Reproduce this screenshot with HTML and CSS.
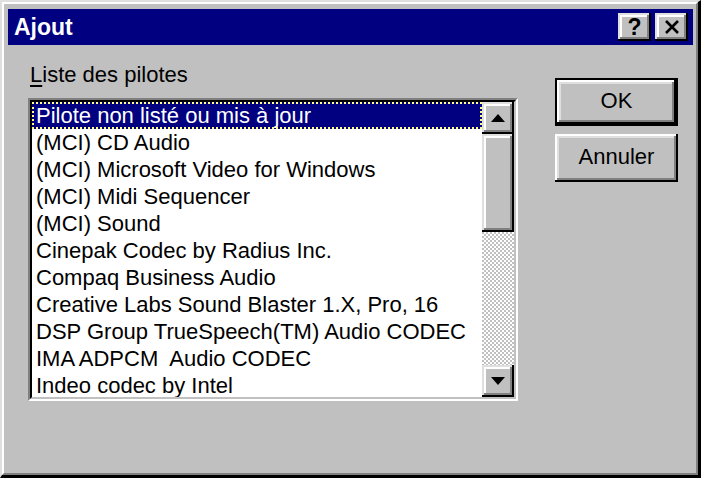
FILE: index.html
```html
<!DOCTYPE html>
<html lang="fr">
<head>
<meta charset="utf-8">
<title>Ajout</title>
<link rel="stylesheet" href="styles.css">
</head>
<body>
<div class="win">
  <div class="win-in">
    <div class="titlebar">
      <span class="title">Ajout</span>
      <div class="capbtns">
        <div class="capbtn help">?</div>
        <div class="capbtn close">
          <svg width="16" height="14" viewBox="0 0 16 14"><path d="M2 1 L14 13 M14 1 L2 13" stroke="#000" stroke-width="2.6" fill="none"/></svg>
        </div>
      </div>
    </div>
    <div class="client">
      <div class="left">
        <div class="label"><u>L</u>iste des pilotes</div>
        <div class="listbox">
          <div class="listbox-in">
            <div class="items">
              <div class="item selected">Pilote non listé ou mis à jour</div>
              <div class="item">(MCI) CD Audio</div>
              <div class="item">(MCI) Microsoft Video for Windows</div>
              <div class="item">(MCI) Midi Sequencer</div>
              <div class="item">(MCI) Sound</div>
              <div class="item">Cinepak Codec by Radius Inc.</div>
              <div class="item">Compaq Business Audio</div>
              <div class="item">Creative Labs Sound Blaster 1.X, Pro, 16</div>
              <div class="item">DSP Group TrueSpeech(TM) Audio CODEC</div>
              <div class="item">IMA ADPCM&nbsp; Audio CODEC</div>
              <div class="item">Indeo codec by Intel</div>
            </div>
            <div class="vscroll">
              <div class="sbtn">
                <svg width="14" height="8" viewBox="0 0 14 8"><polygon points="7,0 14,8 0,8" fill="#000"/></svg>
              </div>
              <div class="thumb"></div>
              <div class="track"></div>
              <div class="sbtn">
                <svg width="14" height="8" viewBox="0 0 14 8"><polygon points="0,0 14,0 7,8" fill="#000"/></svg>
              </div>
            </div>
          </div>
        </div>
      </div>
      <div class="right">
        <div class="btn-default"><div class="btn">OK</div></div>
        <div class="btn">Annuler</div>
      </div>
    </div>
  </div>
</div>
</body>
</html>
```
FILE: styles.css
```css
html, body {
  margin: 0;
  padding: 0;
}
body {
  width: 701px;
  height: 478px;
  overflow: hidden;
  background: #c0c0c0;
  font-family: "Liberation Sans", Arial, sans-serif;
  font-size: 22px;
  color: #000;
}
.win {
  box-sizing: border-box;
  width: 701px;
  height: 478px;
  border-style: solid;
  border-width: 2px 3px 3px 2px;
  border-color: #dfdfdf #000 #000 #dfdfdf;
  background: #c0c0c0;
}
.win-in {
  box-sizing: border-box;
  height: 100%;
  border-style: solid;
  border-width: 2px;
  border-color: #fff #808080 #808080 #fff;
  padding: 5px 3px 0 4px;
  display: flex;
  flex-direction: column;
}
.titlebar {
  height: 36px;
  flex: none;
  background: #000080;
  display: flex;
  align-items: center;
  justify-content: space-between;
  padding: 0 5px 0 6px;
}
.title {
  color: #fff;
  font-weight: bold;
  font-size: 23px;
  line-height: 36px;
}
.capbtns {
  display: flex;
  gap: 4px;
}
.capbtn {
  box-sizing: border-box;
  width: 33px;
  height: 28px;
  background: #c0c0c0;
  box-shadow: inset -2px -2px #000, inset 2px 2px #dfdfdf, inset -4px -4px #808080, inset 4px 4px #fff;
  display: flex;
  align-items: center;
  justify-content: center;
}
.help {
  font-weight: bold;
  font-size: 23px;
  line-height: 28px;
  padding-bottom: 1px;
}
.client {
  flex: 1;
  display: flex;
  padding-left: 20px;
}
.left {
  display: flex;
  flex-direction: column;
  padding-top: 17px;
}
.label {
  line-height: 26px;
  padding-left: 2px;
  margin-bottom: 10px;
}
.label u {
  text-decoration-thickness: 2px;
  text-underline-offset: 3px;
}
.listbox {
  box-sizing: border-box;
  width: 490px;
  height: 303px;
  border-style: solid;
  border-width: 2px;
  border-color: #808080 #fff #fff #808080;
}
.listbox-in {
  box-sizing: border-box;
  height: 100%;
  border-style: solid;
  border-width: 2px;
  border-color: #000 #c0c0c0 #c0c0c0 #000;
  background: #fff;
  display: flex;
}
.items {
  flex: 1;
  overflow: hidden;
}
.item {
  height: 27px;
  line-height: 27px;
  padding-left: 4px;
  white-space: nowrap;
}
.item.selected {
  background: #000080;
  color: #fff;
  outline: 2px dotted #ffff80;
  outline-offset: -2px;
}
.vscroll {
  width: 32px;
  display: flex;
  flex-direction: column;
}
.sbtn, .thumb {
  box-sizing: border-box;
  background: #c0c0c0;
  box-shadow: inset -2px -2px #000, inset 2px 2px #dfdfdf, inset -4px -4px #808080, inset 4px 4px #fff;
}
.sbtn {
  height: 32px;
  display: flex;
  align-items: center;
  justify-content: center;
}
.thumb {
  height: 98px;
}
.track {
  flex: 1;
  background: repeating-conic-gradient(#fff 0 25%, #c0c0c0 0 50%) 0 0 / 4px 4px;
}
.right {
  margin-left: 37px;
  padding-top: 33px;
  display: flex;
  flex-direction: column;
  gap: 8px;
}
.btn {
  box-sizing: border-box;
  width: 123px;
  height: 48px;
  background: #c0c0c0;
  box-shadow: inset -2px -2px #000, inset 2px 2px #fff, inset -4px -4px #808080, inset 4px 4px #dfdfdf;
  display: flex;
  align-items: center;
  justify-content: center;
  padding-bottom: 2px;
}
.btn-default {
  box-sizing: border-box;
  width: 123px;
  height: 48px;
  border: 2px solid #000;
}
.btn-default .btn {
  width: 119px;
  height: 44px;
}
```
